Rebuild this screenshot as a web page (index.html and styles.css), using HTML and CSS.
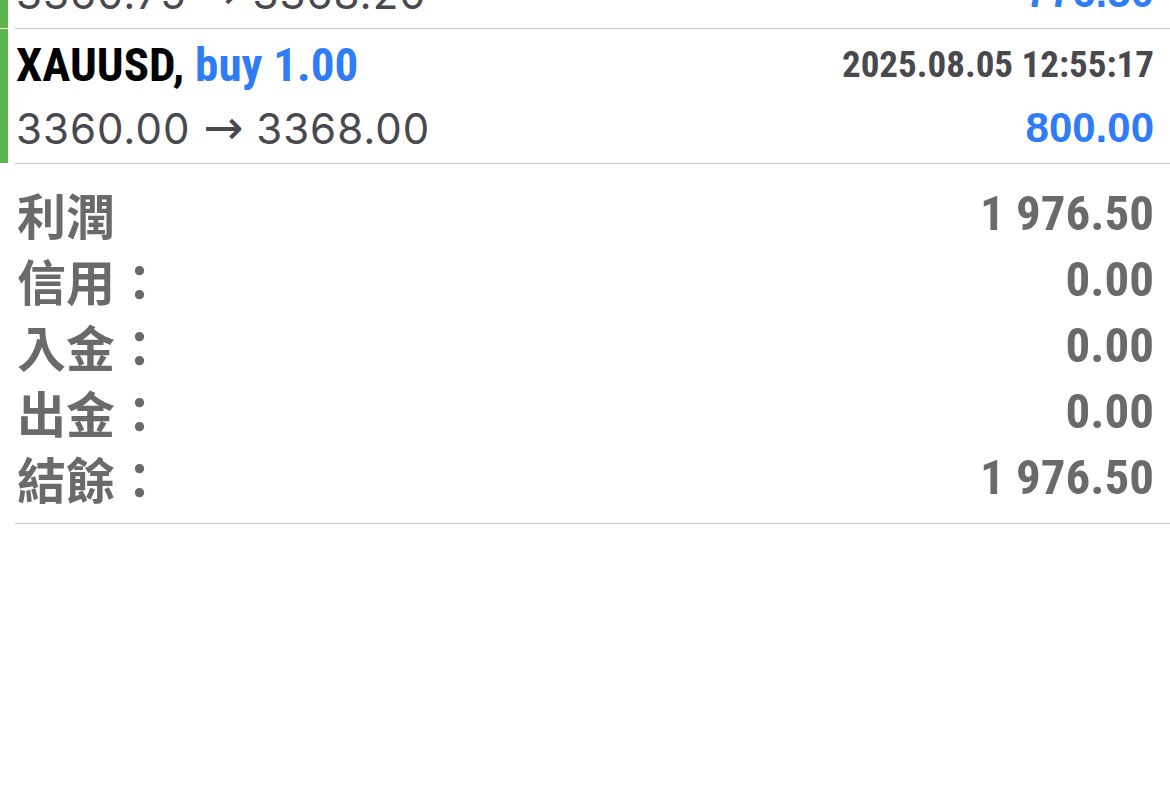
FILE: index.html
```html
<!DOCTYPE html>
<html lang="zh-Hant">
<head>
    <meta charset="UTF-8">
    <meta name="viewport" content="width=device-width, initial-scale=1.0">
    <title>歷史</title>
    <link rel="stylesheet" href="styles.css">
</head>
<body>

    <!-- Lista de negócios (o primeiro está parcialmente rolado para cima) -->
    <div class="deals">
        <div class="deal">
            <div class="deal-mark"></div>
            <div class="deal-body">
                <div class="deal-line">
                    <div class="deal-title"><span class="symbol">XAUUSD,</span> <span class="side">buy 1.00</span></div>
                    <div class="deal-time">2025.08.05 12:41:08</div>
                </div>
                <div class="deal-line">
                    <div class="deal-prices">3360.75 <span class="arrow">→</span> 3368.20</div>
                    <div class="deal-profit">776.50</div>
                </div>
            </div>
        </div>
        <div class="deal">
            <div class="deal-mark"></div>
            <div class="deal-body">
                <div class="deal-line">
                    <div class="deal-title"><span class="symbol">XAUUSD,</span> <span class="side">buy 1.00</span></div>
                    <div class="deal-time">2025.08.05 12:55:17</div>
                </div>
                <div class="deal-line">
                    <div class="deal-prices">3360.00 <span class="arrow">→</span> 3368.00</div>
                    <div class="deal-profit">800.00</div>
                </div>
            </div>
        </div>
    </div>

    <!-- Resumo -->
    <div class="summary">
        <div class="summary-row"><span class="summary-label">利潤</span><span class="summary-value">1 976.50</span></div>
        <div class="summary-row"><span class="summary-label">信用：</span><span class="summary-value">0.00</span></div>
        <div class="summary-row"><span class="summary-label">入金：</span><span class="summary-value">0.00</span></div>
        <div class="summary-row"><span class="summary-label">出金：</span><span class="summary-value">0.00</span></div>
        <div class="summary-row"><span class="summary-label">結餘：</span><span class="summary-value">1 976.50</span></div>
    </div>

</body>
</html>
```

FILE: styles.css
```css
html, body {
    height: 100%;
    margin: 0;
    padding: 0;
    overflow: hidden;
}

body {
    font-family: "Liberation Sans", Arial, sans-serif;
    background-color: #fff;
}

.deals {
    margin-top: -106px; /* lista rolada */
}

.deal {
    display: flex;
}

.deal-mark {
    width: 8px;
    flex-shrink: 0;
    margin-bottom: 1px;
    background-color: #5cb54c;
}

.deal-body {
    flex: 1;
    margin-left: 7px;
    padding: 4px 16px 4px 1px;
    border-bottom: 1px solid #c8c7cc;
}

.deal-line {
    display: flex;
    justify-content: space-between;
    align-items: center;
    height: 63px;
    line-height: 63px;
    white-space: nowrap;
}

.deal-title {
    font-family: "Liberation Sans Narrow", "Roboto Condensed", Roboto, sans-serif;
    font-weight: bold;
    font-size: 47px;
}

.symbol {
    color: #000;
}

.side {
    color: #2f7cf6;
}

.deal-time {
    font-family: "Liberation Sans Narrow", "Roboto Condensed", Roboto, sans-serif;
    font-weight: bold;
    font-size: 37px;
    color: #48484e;
}

.deal-prices {
    font-family: Inter, "Liberation Sans", sans-serif;
    font-size: 42px;
    letter-spacing: 1px;
    color: #48484e;
}

.deal-prices .arrow {
    font-family: "DejaVu Sans", sans-serif;
    font-size: 48px;
    letter-spacing: 0;
}

.deal-profit {
    font-weight: bold;
    font-size: 42px;
    color: #2f7cf6;
}

.summary {
    margin-left: 15px;
    padding: 17px 16px 12px 2px;
    border-bottom: 1px solid #c8c7cc;
}

.summary-row {
    display: flex;
    justify-content: space-between;
    align-items: center;
    height: 66px;
    line-height: 66px;
    color: #6a6a6a;
}

.summary-label {
    font-family: "Noto Sans CJK TC", "Noto Sans CJK SC", sans-serif;
    font-weight: bold;
    font-size: 49px;
}

.summary-value {
    font-family: "Liberation Sans Narrow", "Roboto Condensed", Roboto, sans-serif;
    font-weight: bold;
    font-size: 49px;
}
```
